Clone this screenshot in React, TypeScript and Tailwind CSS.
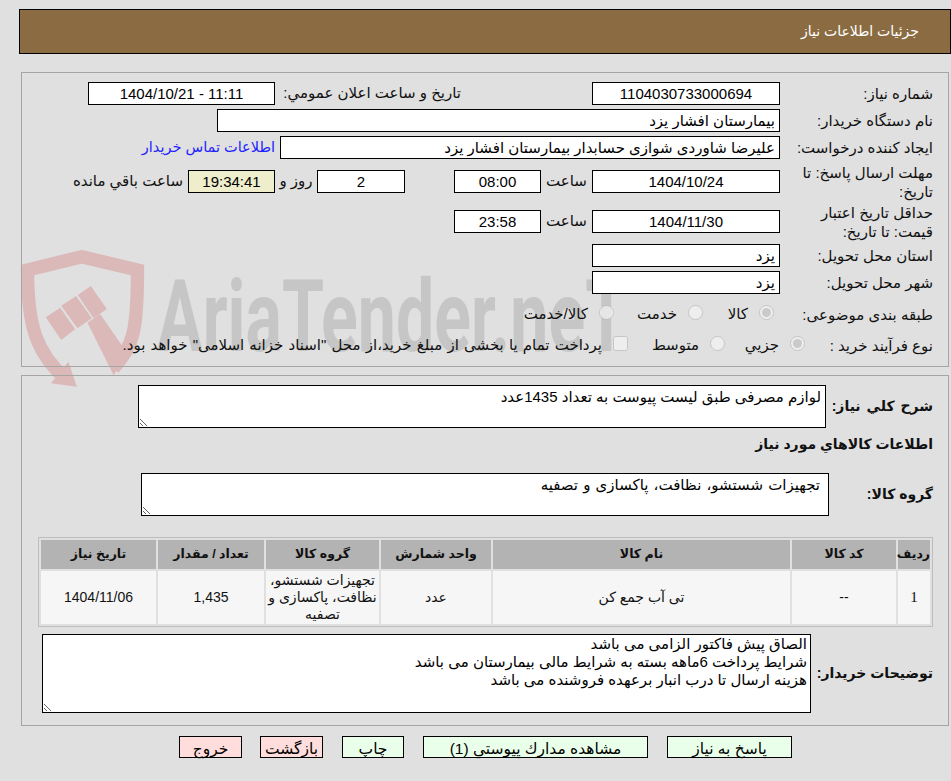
const font = "[font-family:'Liberation_Sans','DejaVu_Sans',sans-serif]"

const inputCls = 'h-full border border-black bg-white px-1 text-[15px] text-black outline-none shrink-0'

function Box({ value, w, className = 'text-center', dir }: { value: string; w: string; className?: string; dir?: string }) {
  return <input readOnly value={value} dir={dir} className={`${inputCls} ${w} ${className}`} />
}

function Label({ children, w = 'w-[153px]' }: { children: React.ReactNode; w?: string }) {
  return <div className={`${w} shrink-0 text-[15px] leading-[19px] text-[#111]`}>{children}</div>
}

function Radio({ checked }: { checked?: boolean }) {
  return <input type="radio" disabled checked={!!checked} readOnly className="w-[15px] h-[15px] m-0 shrink-0 -translate-y-[2px]" />
}

const headers = ['رديف', 'کد کالا', 'نام کالا', 'واحد شمارش', 'گروه کالا', 'تعداد / مقدار', 'تاريخ نياز']

function Watermark() {
  return (
    <div className="absolute left-0 top-0 w-full h-full pointer-events-none" dir="ltr">
      <svg className="absolute left-[20px] top-[250px]" width="127" height="140" viewBox="60 30 380 420">
        <path d="M195 415 C110 340 82 260 82 90 L245 50 L412 90 C412 270 400 320 340 385" fill="none" stroke="#dcb9b9" strokeWidth="40" />
        <path d="M137 232 L180 203 L225 268 L183 300 Z M183 197 L228 168 L275 235 L232 265 Z M233 165 L272 138 L320 207 L280 235 Z M262 248 L300 222 L385 345 L340 405 Z M205 365 L230 440 L152 430 Z" fill="#dcb9b9" />
      </svg>
      <div className="absolute left-[157px] top-[262px] origin-left scale-x-[0.68] whitespace-nowrap font-['Roboto',sans-serif] font-bold text-[100px] leading-[110px] text-[#c6c6c6]">
        AriaTender.neT
      </div>
    </div>
  )
}

export default function App() {
  return (
    <div dir="rtl" className={`relative h-[781px] overflow-hidden bg-[#e0e0e0] ${font} text-[15px] text-[#111]`}>
      <Watermark />
      <div className="relative pt-[9px] pl-[19px]">
        <div className="h-[45px] border border-black bg-[#8b6c42] pr-[31px] flex items-center text-[14px] text-white">
          جزئیات اطلاعات نیاز
        </div>

        <div className="mt-[18px] ml-[2px] mr-[2px] h-[295px] border border-[#a5a5a5] pt-[9px] pr-[15px]">
          <div className="flex h-[23px] items-center">
            <Label>شماره نياز:</Label>
            <Box value="1104030733000694" w="w-[188px]" />
            <div className="mr-[131px] w-[186px] shrink-0">تاريخ و ساعت اعلان عمومي:</div>
            <Box value="1404/10/21 - 11:11" w="w-[187px]" dir="ltr" />
          </div>
          <div className="flex h-[23px] items-center mt-[4px]">
            <Label>نام دستگاه خريدار:</Label>
            <Box value="بیمارستان افشار یزد" w="w-[563px]" className="text-right" />
          </div>
          <div className="flex h-[23px] items-center mt-[4px]">
            <Label>ايجاد کننده درخواست:</Label>
            <Box value="علیرضا شاوردی شوازی حسابدار بیمارستان افشار یزد" w="w-[500px]" className="text-right" />
            <a className="mr-[5px] whitespace-nowrap text-[14.5px] text-[#2222ff]">اطلاعات تماس خريدار</a>
          </div>
          <div className="flex h-[23px] items-center mt-[11px]">
            <Label>مهلت ارسال پاسخ: تا<br />تاريخ:</Label>
            <Box value="1404/10/24" w="w-[188px]" />
            <div className="w-[51px] shrink-0 text-center">ساعت</div>
            <Box value="08:00" w="w-[87px]" />
            <Box value="2" w="w-[88px] mr-[49px]" />
            <div className="w-[42px] shrink-0 text-center">روز و</div>
            <Box value="19:34:41" w="w-[87px] !bg-[#eeeecc]" />
            <div className="mr-[5px] whitespace-nowrap">ساعت باقي مانده</div>
          </div>
          <div className="flex h-[23px] items-center mt-[17px]">
            <Label>حداقل تاريخ اعتبار<br />قيمت: تا تاريخ:</Label>
            <Box value="1404/11/30" w="w-[188px]" />
            <div className="w-[51px] shrink-0 text-center">ساعت</div>
            <Box value="23:58" w="w-[87px]" />
          </div>
          <div className="flex h-[23px] items-center mt-[11px]">
            <Label>استان محل تحويل:</Label>
            <Box value="یزد" w="w-[188px]" className="text-right" />
          </div>
          <div className="flex h-[23px] items-center mt-[4px]">
            <Label>شهر محل تحويل:</Label>
            <Box value="یزد" w="w-[188px]" className="text-right" />
          </div>
          <div className="flex h-[24px] items-center mt-[8px]">
            <Label>طبقه بندی موضوعی:</Label>
            <div className="w-[71px] mr-[6px] flex items-center gap-[11px] shrink-0"><Radio checked />کالا</div>
            <div className="w-[89px] flex items-center gap-[11px] shrink-0"><Radio />خدمت</div>
            <div className="flex items-center gap-[11px] shrink-0"><Radio />کالا/خدمت</div>
          </div>
          <div className="flex h-[24px] items-center mt-[7px]">
            <Label w="w-[128px]">نوع فرآیند خرید :</Label>
            <div className="w-[80px] flex items-center gap-[11px] shrink-0"><Radio checked />جزيي</div>
            <div className="w-[97px] flex items-center gap-[11px] shrink-0"><Radio />متوسط</div>
            <div className="flex items-center gap-[11px] whitespace-nowrap [word-spacing:1px]">
              <input type="checkbox" disabled className="w-[15px] h-[15px] m-0 shrink-0 -translate-y-[2px]" />
              پرداخت تمام یا بخشی از مبلغ خرید،از محل "اسناد خزانه اسلامی" خواهد بود.
            </div>
          </div>
        </div>

        <div className="mt-[8px] ml-[2px] mr-[2px] h-[351px] border border-[#a5a5a5] pt-[9px] pr-[15px] pl-[15px]">
          <div className="flex items-center h-[43px]">
            <div className="w-[107px] shrink-0 font-bold text-[14px] [word-spacing:2px]">شرح كلي نياز:</div>
            <textarea readOnly defaultValue="لوازم مصرفی طبق لیست پیوست به تعداد 1435عدد" className="w-[688px] h-[43px] border border-black bg-white px-[4px] text-[15px] text-black outline-none" />
          </div>
          <div className="mt-[4px] h-[24px] leading-[24px] font-bold text-[14px]">اطلاعات كالاهاي مورد نياز</div>
          <div className="flex items-center h-[43px] mt-[17px]">
            <div className="w-[104px] shrink-0 font-bold text-[14px]">گروه کالا:</div>
            <textarea readOnly defaultValue="تجهیزات شستشو، نظافت، پاکسازی و تصفیه" className="w-[688px] h-[43px] border border-black bg-white px-[8px] text-[15px] [word-spacing:1px] text-black outline-none" />
          </div>
          <table className="mt-[21px] w-[895px] table-fixed border-separate border-spacing-[2px] border border-[#bdbdbd] text-center text-[14px]">
            <colgroup>
              <col className="w-[32px]" />
              <col className="w-[104px]" />
              <col className="w-[297px]" />
              <col className="w-[110px]" />
              <col className="w-[113px]" />
              <col className="w-[106px]" />
              <col className="w-[115px]" />
            </colgroup>
            <thead>
              <tr className="h-[29px] bg-[#b3b3b3]">
                {headers.map((h) => (
                  <th key={h} className="p-0 font-bold text-[12.5px] whitespace-nowrap">{h}</th>
                ))}
              </tr>
            </thead>
            <tbody>
              <tr className="h-[53px] bg-[#f6f6f6]">
                <td className="p-0 font-['Liberation_Serif',serif] text-[15px]">1</td>
                <td className="p-0">--</td>
                <td className="p-0">تی آب جمع کن</td>
                <td className="p-0">عدد</td>
                <td className="p-0 leading-[17px]">تجهیزات شستشو، نظافت، پاکسازی و تصفیه</td>
                <td className="p-0">1,435</td>
                <td className="p-0">1404/11/06</td>
              </tr>
            </tbody>
          </table>
          <div className="flex items-center mt-[7px]">
            <div className="w-[122px] shrink-0 font-bold text-[14px]">توضیحات خریدار:</div>
            <textarea
              readOnly
              defaultValue={'الصاق پیش فاکتور الزامی می باشد\nشرایط پرداخت 6ماهه بسته به شرایط مالی بیمارستان می باشد\nهزینه ارسال تا درب انبار برعهده فروشنده می باشد'}
              className="w-[769px] h-[79px] border border-black bg-white px-[3px] text-[15px] leading-[18px] text-black outline-none"
            />
          </div>
        </div>

        <div className="mt-[10px] flex h-[22px] text-[15.5px] text-black">
          <button className="mr-[159px] w-[125px] border border-black bg-[#eaffea]">پاسخ به نياز</button>
          <button className="mr-[19px] w-[225px] border border-black bg-[#eaffea]">مشاهده مدارك پيوستي (1)</button>
          <button className="mr-[19px] w-[62px] border border-black bg-[#eaffea]">چاپ</button>
          <button className="mr-[19px] w-[63px] border border-black bg-[#ffdddd]">بازگشت</button>
          <button className="mr-[18px] w-[63px] border border-black bg-[#ffdddd]">خروج</button>
        </div>
      </div>
    </div>
  )
}
